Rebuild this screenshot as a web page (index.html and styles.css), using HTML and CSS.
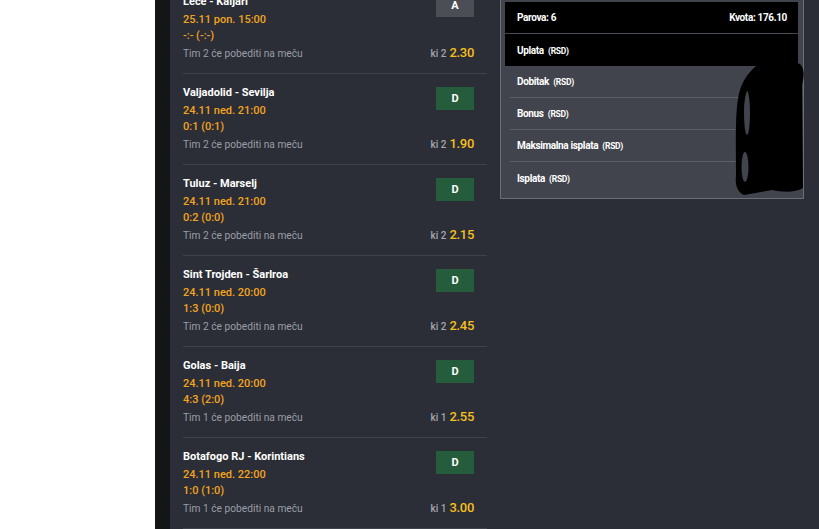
FILE: index.html
```html
<!DOCTYPE html>
<html lang="sr">
<head>
<meta charset="utf-8">
<title>Tiket</title>
<link rel="stylesheet" href="styles.css">
</head>
<body>
<div class="page">
  <div class="blank"></div>
  <div class="strip"></div>
  <main class="main">
    <section class="list">
      <div class="item">
        <div class="info">
          <div class="title">Leće - Kaljari</div>
          <div class="date">25.11 pon. 15:00</div>
          <div class="score">-:- (-:-)</div>
          <div class="market">Tim 2 će pobediti na meču</div>
        </div>
        <div class="side">
          <div class="badge badge-a">A</div>
          <div class="odds"><span class="tip">ki 2</span><span class="val">2.30</span></div>
        </div>
      </div>
      <div class="item">
        <div class="info">
          <div class="title">Valjadolid - Sevilja</div>
          <div class="date">24.11 ned. 21:00</div>
          <div class="score">0:1 (0:1)</div>
          <div class="market">Tim 2 će pobediti na meču</div>
        </div>
        <div class="side">
          <div class="badge">D</div>
          <div class="odds"><span class="tip">ki 2</span><span class="val">1.90</span></div>
        </div>
      </div>
      <div class="item">
        <div class="info">
          <div class="title">Tuluz - Marselj</div>
          <div class="date">24.11 ned. 21:00</div>
          <div class="score">0:2 (0:0)</div>
          <div class="market">Tim 2 će pobediti na meču</div>
        </div>
        <div class="side">
          <div class="badge">D</div>
          <div class="odds"><span class="tip">ki 2</span><span class="val">2.15</span></div>
        </div>
      </div>
      <div class="item">
        <div class="info">
          <div class="title">Sint Trojden - Šarlroa</div>
          <div class="date">24.11 ned. 20:00</div>
          <div class="score">1:3 (0:0)</div>
          <div class="market">Tim 2 će pobediti na meču</div>
        </div>
        <div class="side">
          <div class="badge">D</div>
          <div class="odds"><span class="tip">ki 2</span><span class="val">2.45</span></div>
        </div>
      </div>
      <div class="item">
        <div class="info">
          <div class="title">Golas - Baija</div>
          <div class="date">24.11 ned. 20:00</div>
          <div class="score">4:3 (2:0)</div>
          <div class="market">Tim 1 će pobediti na meču</div>
        </div>
        <div class="side">
          <div class="badge">D</div>
          <div class="odds"><span class="tip">ki 1</span><span class="val">2.55</span></div>
        </div>
      </div>
      <div class="item">
        <div class="info">
          <div class="title">Botafogo RJ - Korintians</div>
          <div class="date">24.11 ned. 22:00</div>
          <div class="score">1:0 (1:0)</div>
          <div class="market">Tim 1 će pobediti na meču</div>
        </div>
        <div class="side">
          <div class="badge">D</div>
          <div class="odds"><span class="tip">ki 1</span><span class="val">3.00</span></div>
        </div>
      </div>
    </section>
    <aside class="panel">
      <div class="row row-dark row-line"><span>Parova: 6</span><span>Kvota: 176.10</span></div>
      <div class="row row-dark"><span>Uplata <small>(RSD)</small></span></div>
      <div class="row row-line"><span>Dobitak <small>(RSD)</small></span></div>
      <div class="row row-line"><span>Bonus <small>(RSD)</small></span></div>
      <div class="row row-line"><span>Maksimalna isplata <small>(RSD)</small></span></div>
      <div class="row"><span>Isplata <small>(RSD)</small></span></div>
      <svg class="scribble" width="76" height="145" viewBox="0 0 76 145">
        <path d="M25 12 C35 5 60 4 70 9 C75 14 74 22 72 30 L73 133 C65 138 52 137 42 135 L14 140 C7 137 5 130 6 120 C6 95 5 62 8 44 C10 30 16 20 25 12 Z" fill="#000"/>
        <ellipse cx="17" cy="58" rx="3" ry="22" fill="#41444c"/>
        <ellipse cx="15" cy="112" rx="3.5" ry="15" fill="#41444c"/>
        <path d="M30 18 C20 22 14 34 12 48" fill="none" stroke="#000" stroke-width="4" stroke-linecap="round"/>
      </svg>
    </aside>
    <div class="rest"></div>
  </main>
</div>
</body>
</html>
```
FILE: styles.css
```css
html, body {
  margin: 0;
  padding: 0;
  background: #ffffff;
  height: 529px;
  overflow: hidden;
}
.page {
  display: flex;
  height: 529px;
  font-family: Roboto, "Liberation Sans", sans-serif;
}
.blank {
  width: 155px;
  flex: none;
  background: #ffffff;
}
.strip {
  width: 15px;
  flex: none;
  background: #131517;
}
.main {
  flex: 1;
  display: flex;
  align-items: flex-start;
  background: #2b2e36;
  overflow: hidden;
}
.list {
  width: 304px;
  flex: none;
  padding: 0 13px;
  margin-top: -16px;
}
.item {
  display: flex;
  justify-content: space-between;
  padding: 11px 13px 10px 0;
  border-bottom: 1px solid #3f434c;
}
.item:first-child {
  padding-top: 10px;
}
.info {
  display: flex;
  flex-direction: column;
}
.title {
  color: #ffffff;
  font-size: 11px;
  font-weight: 700;
  line-height: 16px;
}
.date {
  color: #f3a41f;
  font-size: 11px;
  font-weight: 500;
  line-height: 18px;
  margin-top: 1px;
}
.score {
  color: #f3a41f;
  font-size: 11px;
  font-weight: 500;
  line-height: 14px;
}
.market {
  color: #9a9ea7;
  font-size: 10.2px;
  line-height: 18px;
  margin-top: 2px;
}
.side {
  display: flex;
  flex-direction: column;
  justify-content: space-between;
  align-items: flex-end;
  padding-top: 2px;
}
.item:first-child .side {
  padding-top: 0;
}
.badge {
  width: 38px;
  height: 23px;
  background: #255c3c;
  color: #ffffff;
  font-size: 11px;
  font-weight: 700;
  display: flex;
  align-items: center;
  justify-content: center;
}
.badge-a {
  background: #4b4e55;
}
.odds {
  line-height: 18px;
  display: flex;
  align-items: baseline;
  gap: 3px;
}
.tip {
  color: #a3a7af;
  font-size: 10px;
  font-weight: 500;
}
.val {
  color: #f6bf1e;
  font-size: 13px;
  font-weight: 500;
  letter-spacing: -0.3px;
}
.panel {
  position: relative;
  width: 293px;
  flex: none;
  background: #41444c;
  border: 1px solid #6c6f76;
  border-top-width: 0;
  padding: 2px 5px 4px 4px;
  font-size: 10px;
  font-weight: 700;
  color: #ffffff;
  letter-spacing: -0.35px;
}
.row {
  height: 31px;
  padding: 0 11px 0 12px;
  display: flex;
  align-items: center;
  justify-content: space-between;
  position: relative;
}
.row:last-of-type {
  height: 32px;
}
.row-dark {
  background: #000000;
}
.row-dark + .row-dark {
  height: 32px;
}
.row-line {
  border-bottom: 1px solid transparent;
  background-clip: padding-box;
}
.row-line::after {
  content: "";
  position: absolute;
  left: 5px;
  right: 5px;
  bottom: -1px;
  height: 1px;
  background: #5b5e66;
}
.row-dark.row-line::after {
  background: #4f5258;
}
.row small {
  font-size: 8.5px;
  font-weight: 700;
  margin-left: 2px;
  letter-spacing: -0.3px;
}
.scribble {
  position: absolute;
  left: 229px;
  top: 55px;
}
.rest {
  flex: 1;
}
```
